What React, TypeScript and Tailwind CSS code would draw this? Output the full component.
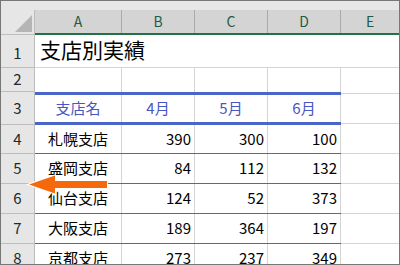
import React from "react";

const F = { fontFamily: '"Noto Sans CJK JP", "Noto Sans", sans-serif' };

const data: [string, number, number, number][] = [
  ["札幌支店", 390, 300, 100],
  ["盛岡支店", 84, 112, 132],
  ["仙台支店", 124, 52, 373],
  ["大阪支店", 189, 364, 197],
  ["京都支店", 273, 237, 349],
];
const heights = ["h-[29px]", "h-[30px]", "h-[30px]", "h-[30px]", "h-[30px]"];

function RowHead({ n, h, extra = "" }: { n: number; h: string; extra?: string }) {
  return (
    <div
      className={`${h} ${extra} w-[34px] shrink-0 bg-[#e6e6e6] border-r border-b border-[#bdbdbd] flex items-center justify-center text-[15px] text-[#262626]`}
    >
      {n}
    </div>
  );
}

export default function App() {
  return (
    <div
      className="relative w-[400px] h-[265px] border border-[#777777] overflow-hidden bg-white flex flex-col"
      style={F}
    >
      {/* top band */}
      <div className="h-[9px] shrink-0 bg-[#e6e6e6]" />
      {/* column header */}
      <div className="flex h-[25px] shrink-0">
        <div className="w-[34px] shrink-0 bg-[#e6e6e6] border-r border-b border-[#bdbdbd] flex items-end justify-end p-[2px]">
          <svg width="17" height="17" viewBox="0 0 17 17">
            <polygon points="17,0 17,17 0,17" fill="#b5b5b5" />
          </svg>
        </div>
        <div className="flex-1 flex flex-col">
          <div className="flex h-[23px] bg-[#d4d4d4] text-[14px] text-[#1f5c44]">
            <div className="w-[87px] border-r border-[#a9a9a9] flex items-center justify-center">A</div>
            <div className="w-[73px] border-r border-[#a9a9a9] flex items-center justify-center">B</div>
            <div className="w-[73px] border-r border-[#a9a9a9] flex items-center justify-center">C</div>
            <div className="w-[73px] border-r border-[#a9a9a9] flex items-center justify-center">D</div>
            <div className="flex-1 flex items-center justify-center">E</div>
          </div>
          <div className="h-[2px] bg-[#217346]" />
        </div>
      </div>

      {/* row 1 */}
      <div className="flex shrink-0">
        <RowHead n={1} h="h-[33px]" extra="pt-[4px]" />
        <div className="h-[33px] w-[306px] border-b border-[#d4d4d4] flex items-center pl-[5px] pb-[2px] text-[21px] text-black">
          支店別実績
        </div>
        <div className="h-[33px] flex-1 border-b border-[#d4d4d4]" />
      </div>

      {/* row 2 */}
      <div className="flex shrink-0">
        <RowHead n={2} h="h-[24px]" />
        <div className="w-[87px] h-[24px] border-r border-[#d4d4d4]" />
        <div className="w-[73px] h-[24px] border-r border-[#d4d4d4]" />
        <div className="w-[73px] h-[24px] border-r border-[#d4d4d4]" />
        <div className="w-[73px] h-[24px] border-r border-[#d4d4d4]" />
        <div className="flex-1" />
      </div>

      {/* row 3 header */}
      <div className="flex shrink-0">
        <RowHead n={3} h="h-[33px]" />
        <div className="w-[306px] h-[33px] flex flex-col">
          <div className="h-[3px] bg-[#4b66c9]" />
          <div className="flex flex-1 text-[15px] text-[#4656c2]">
            <div className="w-[87px] border-r border-[#d4d4d4] flex items-center justify-center">支店名</div>
            <div className="w-[73px] border-r border-[#d4d4d4] flex items-center justify-center">4月</div>
            <div className="w-[73px] border-r border-[#d4d4d4] flex items-center justify-center">5月</div>
            <div className="w-[73px] border-r border-[#d4d4d4] flex items-center justify-center">6月</div>
          </div>
          <div className="h-[3px] bg-[#4b66c9]" />
        </div>
        <div className="flex-1 h-[33px] py-px">
          <div className="h-full border-y border-[#d4d4d4]" />
        </div>
      </div>

      {/* data rows */}
      {data.map((r, i) => (
        <div key={r[0]} className="flex shrink-0">
          <RowHead n={i + 4} h={heights[i]} />
          <div className={`w-[306px] ${heights[i]} flex flex-col`}>
            <div className="flex flex-1 text-[15px] text-black">
              <div className="w-[87px] border-r border-[#d4d4d4] flex items-center justify-center">{r[0]}</div>
              <div className="w-[73px] border-r border-[#d4d4d4] flex items-center justify-end pr-[3px]">{r[1]}</div>
              <div className="w-[73px] border-r border-[#d4d4d4] flex items-center justify-end pr-[3px]">{r[2]}</div>
              <div className="w-[73px] border-r border-[#d4d4d4] flex items-center justify-end pr-[3px]">{r[3]}</div>
            </div>
            <div className="h-px bg-[#4b66c9]" />
          </div>
          <div className={`flex-1 ${heights[i]} border-b border-[#d4d4d4]`} />
        </div>
      ))}

      {/* arrow overlay */}
      <svg
        className="absolute left-0 top-0 pointer-events-none"
        width="400"
        height="265"
        viewBox="0 0 400 265"
      >
        <polygon
          points="28,183.5 54,174.5 54,180 106,180 106,187 54,187 54,192.5"
          fill="#f5690c"
          stroke="white"
          strokeWidth="2"
          strokeLinejoin="miter"
          paintOrder="stroke"
        />
      </svg>
    </div>
  );
}
